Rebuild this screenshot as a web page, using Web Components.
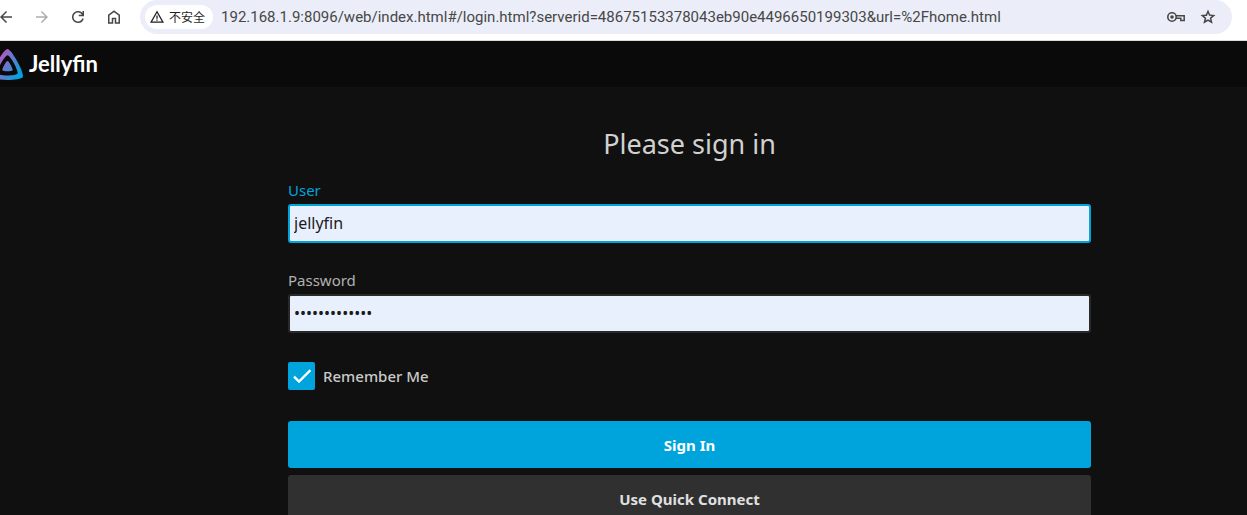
<!DOCTYPE html>
<html lang="en">
<head>
<meta charset="utf-8">
<title>Jellyfin</title>
<style>
html, body { height: 100%; }
body { margin: 0; background: #101010; overflow: hidden; font-family: "Noto Sans", "Noto Sans CJK SC", sans-serif; }
</style>
</head>
<body>
<browser-bar></browser-bar>
<app-header></app-header>
<login-page>
  <login-field kind="text" label="User" value="jellyfin" active></login-field>
  <login-field kind="password" label="Password" value="abcdefghijklm"></login-field>
  <check-option>Remember Me</check-option>
  <action-button primary>Sign In</action-button>
  <action-button>Use Quick Connect</action-button>
</login-page>
<script>
class Base extends HTMLElement {
  connectedCallback() {
    if (!this.shadowRoot) this.attachShadow({ mode: "open" }).innerHTML = this.render();
  }
}

customElements.define("nav-button", class extends Base {
  render() {
    return `<style>
      :host { display: block; width: 36px; flex: none; }
      button { display: grid; place-items: center; width: 100%; height: 34px; padding: 0; border: 0; background: none; color: inherit; }
    </style><button type="button" aria-label="${this.getAttribute("name")}"><slot></slot></button>`;
  }
});

customElements.define("browser-bar", class extends Base {
  render() {
    return `<style>
      :host { display: flex; height: 40px; align-items: flex-start; gap: 8px; padding-right: 15px; background: #fff; border-bottom: 1px solid #dcdcdc; color: #474747; }
      nav { display: flex; margin-left: -12px; }
      svg { display: block; fill: currentColor; }
      .off { color: #adadad; }
      .box { flex: 1; min-width: 0; display: flex; align-items: center; height: 34px; padding: 0 8px 0 5px; border-radius: 17px; background: #ebeef8; }
      .chip { display: flex; align-items: center; gap: 5px; height: 24px; padding: 0 8px 0 5px; border: 0; border-radius: 12px; background: #fff; color: #1f1f1f; font: 12px/24px "Noto Sans CJK SC", sans-serif; white-space: nowrap; }
      input { flex: 1; min-width: 0; margin-left: 8px; padding: 0; height: 24px; border: 0; outline: 0; background: none; color: #474747; font: 15px/24px Roboto, sans-serif; }
      .tools { display: flex; }
      .tools nav-button { width: 32px; }
    </style>
    <nav>
      <nav-button name="Back"><svg width="18" height="18" viewBox="0 0 24 24"><path d="M20 11H7.800l5.600-5.600L12 4l-8 8 8 8 1.400-1.400L7.800 13H20z"/></svg></nav-button>
      <nav-button name="Forward" class="off"><svg width="18" height="18" viewBox="0 0 24 24"><path d="M4 11h12.200l-5.600-5.600L12 4l8 8-8 8-1.400-1.400 5.600-5.600H4z"/></svg></nav-button>
      <nav-button name="Reload"><svg width="18" height="18" viewBox="0 0 24 24"><path d="M12 20a8 8 0 1 1 6-13.250V4h2v7h-7V9h4.200A6 6 0 1 0 17.650 14h2.100A8 8 0 0 1 12 20z"/></svg></nav-button>
      <nav-button name="Home"><svg width="18" height="18" viewBox="0 0 24 24"><path d="M6 19h3v-6h6v6h3v-9l-6-4.500L6 10zm-2 2V9l8-6 8 6v12h-7v-6h-2v6z"/></svg></nav-button>
    </nav>
    <div class="box">
      <button class="chip" type="button"><svg width="14" height="14" viewBox="0 0 24 24"><path d="M0 22 12 1l12 21zm3.700-2.200h16.600L12 5.300zM10.900 9.500h2.200v5.500h-2.200zm0 6.700h2.200v2.200h-2.200z"/></svg><span>不安全</span></button>
      <input aria-label="Address" value="192.168.1.9:8096/web/index.html#/login.html?serverid=48675153378043eb90e4496650199303&amp;url=%2Fhome.html">
      <div class="tools">
        <nav-button name="Passwords"><svg width="18" height="18" viewBox="0 0 18 18"><circle cx="5" cy="9" r="4.200" fill="none" stroke="currentColor" stroke-width="1.600"/><circle cx="5" cy="9" r="1.800"/><path d="M9 7.800h8.200v4.800h-3.400v-2.400H9" fill="none" stroke="currentColor" stroke-width="1.500"/></svg></nav-button>
        <nav-button name="Bookmark"><svg width="18" height="18" viewBox="0 0 24 24"><path d="m8.850 16.800 3.150-1.900 3.150 1.900-.85-3.600 2.800-2.400-3.700-.3L12 7.100l-1.400 3.400-3.700.3 2.800 2.400zM5.800 21l1.650-7.100L2 9.200l7.200-.6L12 2l2.800 6.600 7.200.6-5.450 4.700L18.200 21 12 17.300z"/></svg></nav-button>
      </div>
    </div>`;
  }
});

customElements.define("app-header", class extends Base {
  render() {
    return `<style>
      :host { display: flex; align-items: center; gap: 6px; height: 46px; background: #0a0a0a; color: #fff; }
      svg { display: block; margin-left: -8px; }
      span { font: 700 22px/30px Lato, sans-serif; }
    </style>
    <svg width="31" height="31" viewBox="0 0 24 24" aria-hidden="true">
      <defs><linearGradient id="g" x1="3" y1="8" x2="22" y2="19" gradientUnits="userSpaceOnUse"><stop offset=".1" stop-color="#aa5cc3"/><stop offset="1" stop-color="#00a4dc"/></linearGradient></defs>
      <path fill="url(#g)" fill-rule="evenodd" d="M12 .002C8.826.002-1.398 18.537.160 21.666c1.560 3.129 22.140 3.094 23.682 0C25.384 18.573 15.177 0 12 0zm7.760 18.949c-1.008 2.028-14.493 2.050-15.514 0C3.224 16.900 9.920 4.755 12.003 4.755c2.081 0 8.770 12.166 7.759 14.196zM12 9.198c-1.054 0-4.446 6.150-3.930 7.189.518 1.040 7.348 1.027 7.860 0 .511-1.027-2.874-7.190-3.930-7.190z"/>
    </svg>
    <span>Jellyfin</span>`;
  }
});

customElements.define("login-page", class extends Base {
  render() {
    return `<style>
      :host { display: block; padding: 38px 24px 0 156px; }
      form { display: flex; flex-direction: column; max-width: 803px; margin: 0 auto; }
      h1 { margin: 0 0 17px; color: #d1d1d1; font-weight: 400; font-size: 27px; line-height: 38px; text-align: center; }
    </style><form><h1>Please sign in</h1><slot></slot></form>`;
  }
});

customElements.define("login-field", class extends Base {
  render() {
    const on = this.hasAttribute("active");
    return `<style>
      :host { display: flex; flex-direction: column; gap: 4px; margin-bottom: 27px; }
      label { color: ${on ? "#00a4dc" : "#b0b0b0"}; font-size: 15px; line-height: 20px; }
      input { box-sizing: border-box; width: 100%; height: 39px; padding: 0 4px 1px; border: 2px solid ${on ? "#00a4dc" : "#292929"}; border-radius: 3px; outline: 0; background: #e8f0fe; color: #1b1b1b; font-family: inherit; font-size: 16px; }
    </style>
    <label for="f">${this.getAttribute("label")}</label>
    <input id="f" type="${this.getAttribute("kind")}" value="${this.getAttribute("value")}">`;
  }
});

customElements.define("check-option", class extends Base {
  render() {
    return `<style>
      :host { display: block; margin: 2px 0 31px; }
      label { display: flex; align-items: center; gap: 8px; color: #c9c9c9; font-size: 15px; font-weight: 500; line-height: 28px; }
      .tick { display: grid; width: 27px; height: 28px; }
      .tick > * { grid-area: 1 / 1; }
      input { appearance: none; width: 100%; height: 100%; margin: 0; border-radius: 2px; }
      input:checked { background: #00a4dc; }
      svg { place-self: center; pointer-events: none; }
    </style>
    <label><span class="tick"><input type="checkbox" checked><svg width="24" height="24" viewBox="0 0 24 24"><path fill="#fff" stroke="#fff" stroke-width=".5" d="M9 16.170 4.830 12l-1.420 1.410L9 19 21 7l-1.410-1.410z"/></svg></span><span><slot></slot></span></label>`;
  }
});

customElements.define("action-button", class extends Base {
  render() {
    const p = this.hasAttribute("primary");
    return `<style>
      :host { display: block; }
      :host([primary]) { margin-bottom: 7px; }
      button { width: 100%; height: 47px; padding: 0; border: 0; border-radius: 3px; background: ${p ? "#00a4dc" : "#303030"}; color: ${p ? "#fff" : "#e0e0e0"}; font-family: inherit; font-size: 15px; font-weight: 700; line-height: 20px; }
    </style><button type="button"><slot></slot></button>`;
  }
});
</script>
</body>
</html>
